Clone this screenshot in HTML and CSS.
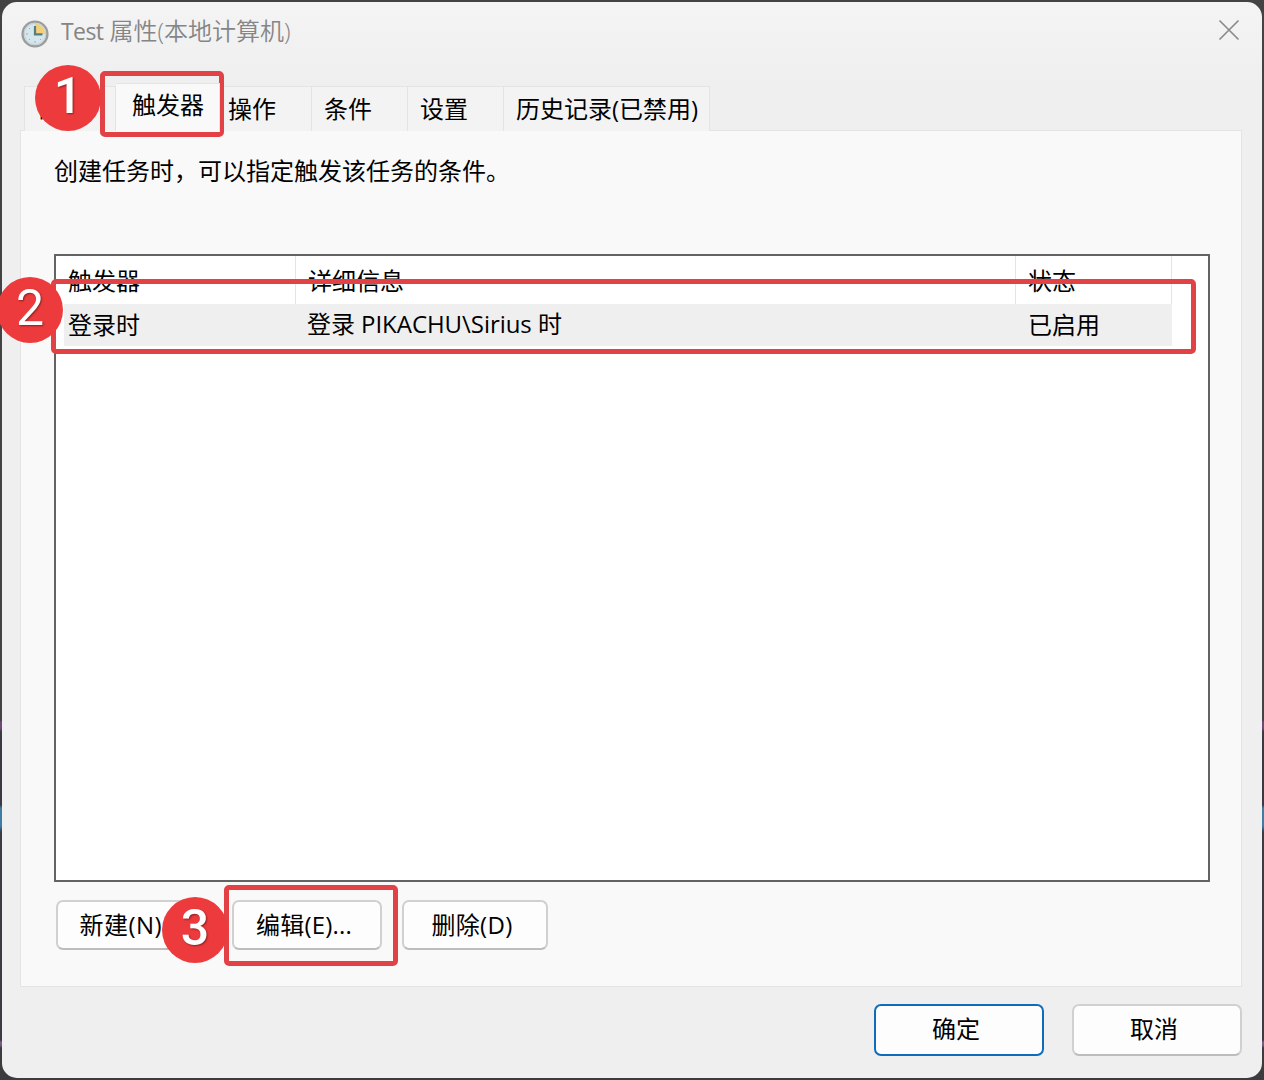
FILE: index.html
```html
<!DOCTYPE html>
<html lang="zh-CN">
<head>
<meta charset="utf-8">
<title>Test 属性(本地计算机)</title>
<link rel="stylesheet" href="styles.css">
</head>
<body>
<div class="desktop">
  <main class="dialog">
    <header class="titlebar">
      <svg class="clock" viewBox="0 0 28 28">
        <circle cx="14" cy="14" r="12.4" fill="#dce9ed" stroke="#9b9d9d" stroke-width="2.4"/>
        <circle cx="14" cy="14" r="10.7" fill="#d6e6ed" stroke="#c3d0d3" stroke-width="1"/>
        <path d="M14 14V3.8A10.2 10.2 0 0 1 24.2 14Z" fill="#f2cf78"/>
        <path d="M14 6V14.4H21.5" fill="none" stroke="#567c83" stroke-width="2.2"/>
        <path d="M5 14h2M14 21v2M8 20l1-1M20 20l-1-1M8 8l1 1" stroke="#9cafb5" stroke-width="1"/>
      </svg>
      <h1 class="title"><span class="title-name">Test</span> 属性(本地计算机)</h1>
      <svg class="close" viewBox="0 0 22 22"><path d="M1.5 1.5L20.5 20.5M20.5 1.5L1.5 20.5" fill="none" stroke="#8b8b8b" stroke-width="1.7"/></svg>
    </header>
    <nav class="tabs">
      <span class="tab tab-general">常规</span>
      <span class="tab tab-active">触发器</span>
      <span class="tab tab-actions">操作</span>
      <span class="tab">条件</span>
      <span class="tab">设置</span>
      <span class="tab tab-history">历史记录(已禁用)</span>
    </nav>
    <section class="panel">
      <p class="hint">创建任务时，可以指定触发该任务的条件。</p>
      <div class="list">
        <div class="row head">
          <span class="cell">触发器</span><span class="cell">详细信息</span><span class="cell">状态</span>
        </div>
        <div class="row item">
          <span class="cell">登录时</span><span class="cell cell-detail">登录 PIKACHU\Sirius 时</span><span class="cell">已启用</span>
        </div>
      </div>
      <div class="actions">
        <button class="btn btn-new">新建(N)...</button>
        <button class="btn btn-edit">编辑(E)...</button>
        <button class="btn btn-delete">删除(D)</button>
      </div>
    </section>
    <footer class="footer">
      <button class="btn btn-main btn-ok">确定</button>
      <button class="btn btn-main">取消</button>
    </footer>
  </main>
  <div class="frame frame-1"></div>
  <div class="frame frame-2"></div>
  <div class="frame frame-3"></div>
  <div class="badge badge-1">1</div>
  <div class="badge badge-2">2</div>
  <div class="badge badge-3">3</div>
</div>
</body>
</html>
```
FILE: styles.css
```css
* { box-sizing: border-box; }
body { margin: 0; }
.desktop {
  position: relative;
  width: 1264px;
  height: 1080px;
  padding: 2px;
  overflow: hidden;
  background: linear-gradient(#434343 0 720px, #6b4a77 722px 728px, #3a3a42 732px 805px, #3f7ba5 808px 826px, #3c3a43 832px 1040px, #7a5a86 1042px 1045px, #3c3c3f 1048px);
  font-family: "Open Sans", "Noto Sans CJK SC", sans-serif;
  font-size: 24px;
  line-height: 36px;
  color: #000;
}
.dialog {
  width: 1260px;
  height: 1076px;
  border-radius: 15px;
  background: linear-gradient(#f4f4f4, #efefef 80px);
}
.titlebar { display: flex; height: 80px; padding: 17px 22px 0 19px; }
.clock { width: 28px; height: 28px; margin-top: 1px; }
.title {
  flex: 1;
  margin: -6px 0 0 12px;
  font-size: 24px;
  font-weight: 350;
  color: #858585;
}
.title-name { font-weight: 400; font-size: 23px; letter-spacing: -0.6px; }
.close { width: 22px; height: 22px; }
.tabs { display: flex; align-items: flex-end; height: 49px; padding-left: 22px; }
.tab {
  width: 96px;
  height: 45px;
  padding: 4px 0 0 12px;
  border-top: 1px solid #e4e4e4;
  border-right: 1px solid #e4e4e4;
  background: #f3f3f3;
  white-space: nowrap;
}
.tab-general { width: 92px; border-left: 1px solid #e4e4e4; }
.tab-active {
  width: 104px;
  height: 49px;
  margin-bottom: -1px;
  padding: 3px 0 0 16px;
  background: #f9f9f9;
  z-index: 1;
}
.tab-actions { width: 92px; padding-left: 8px; }
.tab-history { width: 206px; }
.panel {
  width: 1222px;
  height: 857px;
  margin: -1px 0 0 18px;
  padding: 22px 31px 0 33px;
  border: 1px solid #e4e4e4;
  background: #f9f9f9;
}
.hint { margin: 0; height: 101px; }
.list { height: 628px; border: 2px solid #636363; background: #fff; }
.row { display: grid; grid-template-columns: 240px 720px 156px; width: 1116px; }
.head { height: 48px; }
.head .cell { padding-top: 7px; border-right: 1px solid #e4e4e4; }
.cell { padding: 3px 0 0 12px; white-space: pre; }
.item { height: 42px; background: linear-gradient(#efefef, #efefef) 8px 0 no-repeat; }
.item .cell-detail { padding-top: 2px; padding-left: 11px; letter-spacing: -0.05px; }
.actions { display: flex; padding: 18px 0 0 2px; }
.btn {
  height: 50px;
  padding: 0;
  border: 2px solid #d0d0d0;
  border-bottom-color: #bdbdbd;
  border-radius: 7px;
  background: #fdfdfd;
  font: inherit;
  line-height: 36px;
  color: #000;
}
.btn-new { width: 152px; margin-right: 24px; padding-right: 2px; letter-spacing: 0.5px; }
.btn-edit { width: 150px; margin-right: 20px; padding-right: 6px; letter-spacing: 0.2px; }
.btn-delete { width: 146px; padding-right: 6px; letter-spacing: 0.3px; }
.footer { display: flex; justify-content: flex-end; gap: 28px; padding: 17px 20px 0 0; }
.btn-main { width: 170px; height: 52px; padding: 0 6px 2px 0; }
.btn-ok { border-color: #0f6cbd; }
.frame { position: absolute; border: 5px solid #e24246; border-radius: 5px; }
.frame-1 { left: 100px; top: 71px; width: 124px; height: 66px; }
.frame-2 { left: 51px; top: 279px; width: 1145px; height: 75px; }
.frame-3 { left: 224px; top: 885px; width: 174px; height: 81px; }
.badge {
  position: absolute;
  width: 66px;
  height: 66px;
  border-radius: 50%;
  background: #ed3b3d;
  font-family: Roboto, "Liberation Sans", sans-serif;
  font-size: 50px;
  font-weight: 400;
  line-height: 62px;
  text-align: center;
  color: #fff;
  text-shadow: 1px 1px 2px #8a2021;
}
.badge-1 { left: 35px; top: 65px; font-weight: 500; }
.badge-2 { left: -3px; top: 277px; }
.badge-3 { left: 162px; top: 897px; font-weight: 500; }
```
